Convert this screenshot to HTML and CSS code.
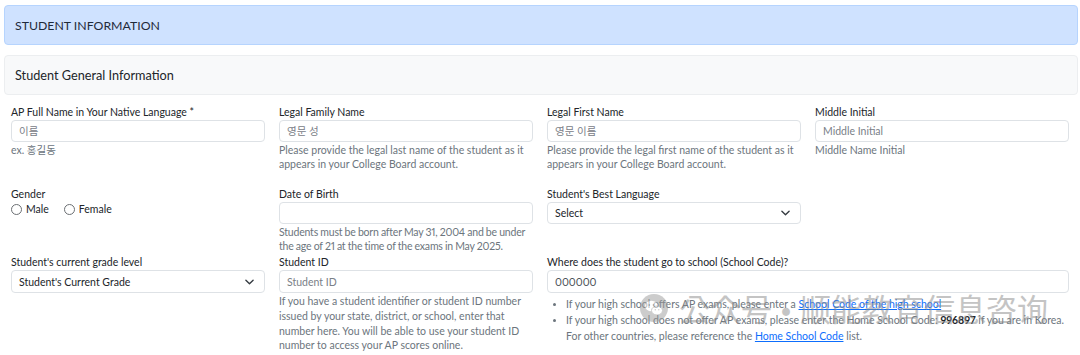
FILE: index.html
```html
<!DOCTYPE html>
<html lang="ko">
<head>
<meta charset="utf-8">
<title>Student Information</title>
<link rel="stylesheet" href="styles.css">
</head>
<body>
<div class="page">
  <div class="bar bar-primary">STUDENT INFORMATION</div>
  <div class="bar bar-light">Student General Information</div>

  <div class="form">
    <div class="row row-1">
      <div class="field">
        <label class="label">AP Full Name in Your Native Language *</label>
        <div class="input placeholder">이름</div>
        <div class="help">ex. 홍길동</div>
      </div>
      <div class="field">
        <label class="label">Legal Family Name</label>
        <div class="input placeholder">영문 성</div>
        <div class="help">Please provide the legal last name of the student as it appears in your College Board account.</div>
      </div>
      <div class="field">
        <label class="label">Legal First Name</label>
        <div class="input placeholder">영문 이름</div>
        <div class="help">Please provide the legal first name of the student as it appears in your College Board account.</div>
      </div>
      <div class="field">
        <label class="label">Middle Initial</label>
        <div class="input placeholder">Middle Initial</div>
        <div class="help">Middle Name Initial</div>
      </div>
    </div>

    <div class="row row-2">
      <div class="field">
        <label class="label">Gender</label>
        <div class="radios">
          <span class="radio"><span class="circle"></span>Male</span>
          <span class="radio"><span class="circle"></span>Female</span>
        </div>
      </div>
      <div class="field">
        <label class="label">Date of Birth</label>
        <div class="input"></div>
        <div class="help tight">Students must be born after May 31, 2004 and be under the age of 21 at the time of the exams in May 2025.</div>
      </div>
      <div class="field">
        <label class="label">Student's Best Language</label>
        <div class="input select">Select<svg class="chev" viewBox="0 0 10 6" width="9" height="6"><path d="M1 1l4 4 4-4" fill="none" stroke="#343a40" stroke-width="1.5" stroke-linecap="round" stroke-linejoin="round"/></svg></div>
      </div>
      <div class="field"></div>
    </div>

    <div class="row row-3">
      <div class="field">
        <label class="label">Student's current grade level</label>
        <div class="input select">Student's Current Grade<svg class="chev" viewBox="0 0 10 6" width="9" height="6"><path d="M1 1l4 4 4-4" fill="none" stroke="#343a40" stroke-width="1.5" stroke-linecap="round" stroke-linejoin="round"/></svg></div>
      </div>
      <div class="field">
        <label class="label">Student ID</label>
        <div class="input placeholder">Student ID</div>
        <div class="help">If you have a student identifier or student ID number issued by your state, district, or school, enter that number here. You will be able to use your student ID number to access your AP scores online.</div>
      </div>
      <div class="field span-2">
        <label class="label">Where does the student go to school (School Code)?</label>
        <div class="input value">000000</div>
        <ul class="bullets">
          <li>If your high school offers AP exams, please enter a <a href="#">School Code of the high school</a></li>
          <li>If your high school does not offer AP exams, please enter the Home School Code: <b>996897</b> if you are in Korea. For other countries, please reference the <a href="#">Home School Code</a> list.</li>
        </ul>
      </div>
    </div>
  </div>

  <div class="watermark">
    <svg class="wm-icon" viewBox="0 0 28 28" width="28" height="28">
      <circle cx="14" cy="14" r="14" fill="#9a9a9a"/>
      <ellipse cx="11.5" cy="12" rx="6.5" ry="5.3" fill="#fff"/>
      <ellipse cx="17" cy="16.5" rx="5.5" ry="4.5" fill="#fff" stroke="#9a9a9a" stroke-width="1"/>
      <circle cx="9.3" cy="11" r="0.9" fill="#9a9a9a"/>
      <circle cx="13.5" cy="11" r="0.9" fill="#9a9a9a"/>
      <circle cx="15.3" cy="15.8" r="0.7" fill="#9a9a9a"/>
      <circle cx="18.8" cy="15.8" r="0.7" fill="#9a9a9a"/>
    </svg>
    <span class="wm-text">公众号 · 顺能教育信息咨询</span>
  </div>
</div>
</body>
</html>
```

FILE: styles.css
```css
* { box-sizing: border-box; }
html, body { margin: 0; padding: 0; background: #fff; }
body {
  font-family: Lato, "Noto Sans CJK KR", sans-serif;
  color: #212529;
  font-size: 10.5px;
  font-variant-numeric: proportional-nums;
}
.page {
  position: relative;
  width: 1080px;
  height: 355px;
  padding: 5px 2px 0 4px;
  overflow: hidden;
}
.bar {
  height: 40px;
  display: flex;
  align-items: center;
  padding: 0 10px;
  border-radius: 4px;
  border: 1px solid;
}
.bar-primary {
  font-size: 12.3px;
  background: #cfe2ff;
  border-color: #b6d4fe;
  color: #1f2a3a;
}
.bar-light {
  font-size: 12.7px;
  margin-top: 10px;
  background: #f8f9fa;
  border-color: #eceef0;
}
.form { padding: 10px 7px 0 7px; }
.row {
  display: grid;
  grid-template-columns: repeat(4, 254px);
  column-gap: 14px;
}
.row-1 { margin-bottom: 16px; }
.row-2 { margin-bottom: 2px; }
.span-2 { grid-column: span 2; }
.label {
  display: block;
  line-height: 14px;
  margin-bottom: 1px;
}
.input {
  height: 22px;
  border: 1px solid #dee2e6;
  border-radius: 4px;
  padding: 0 7px;
  display: flex;
  align-items: center;
  line-height: 14px;
  background: #fff;
}
.row-3 .input { height: 23px; }
.placeholder { color: #7a8087; }
.value { color: #495057; }
.select { justify-content: space-between; padding-right: 10px; }
.chev { flex: none; }
.help {
  color: #6c757d;
  line-height: 14px;
  margin-top: 1px;
}
.help.tight { letter-spacing: -0.2px; word-spacing: -0.2px; }
.row-3 .help { line-height: 14.8px; }
.radios {
  display: flex;
  gap: 15px;
  line-height: 15px;
}
.radio { display: inline-flex; align-items: center; gap: 4px; }
.circle {
  width: 11px;
  height: 11px;
  border: 1px solid #6b6f73;
  border-radius: 50%;
  background: #fff;
}
.bullets {
  margin: 3px 0 0;
  padding-left: 19px;
  color: #6c757d;
  line-height: 16px;
}
.bullets li::marker { font-size: 9px; }
.bullets a { color: #0d6efd; }
.bullets b { color: #212529; }
.watermark {
  position: absolute;
  left: 640px;
  top: 292px;
  display: flex;
  align-items: center;
  gap: 11px;
  opacity: 0.5;
  pointer-events: none;
}
.wm-text {
  font-family: "Noto Sans CJK SC", sans-serif;
  font-size: 31px;
  color: #8a8a8a;
  line-height: 32px;
}
```
